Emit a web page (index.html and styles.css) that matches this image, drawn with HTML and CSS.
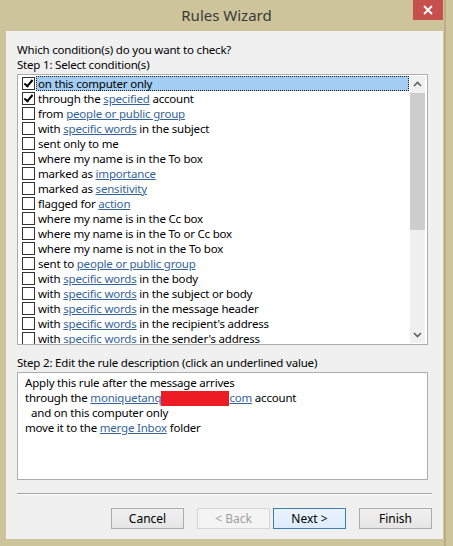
FILE: index.html
```html
<!DOCTYPE html>
<html lang="en">
<head>
  <meta charset="UTF-8">
  <title>Rules Wizard</title>
  <link rel="stylesheet" href="styles.css">
</head>
<body>
  <div class="window">
    <!-- title bar -->
    <div class="titlebar">
      <div class="title">Rules Wizard</div>
      <div class="close">
        <svg width="10" height="10" viewBox="0 0 10 10"><path d="M1 1 L9 9 M9 1 L1 9" stroke="#fff" stroke-width="1.8"/></svg>
      </div>
    </div>

    <div class="client">
      <div class="label">Which condition(s) do you want to check?</div>
      <div class="label">Step 1: Select condition(s)</div>

      <!-- condition list -->
      <div class="listbox">
        <div class="rows">
          <div class="row selected"><span class="check on"></span><span class="text">on this computer only</span></div>
          <div class="row"><span class="check on"></span><span class="text">through the <a>specified</a> account</span></div>
          <div class="row"><span class="check"></span><span class="text">from <a>people or public group</a></span></div>
          <div class="row"><span class="check"></span><span class="text">with <a>specific words</a> in the subject</span></div>
          <div class="row"><span class="check"></span><span class="text">sent only to me</span></div>
          <div class="row"><span class="check"></span><span class="text">where my name is in the To box</span></div>
          <div class="row"><span class="check"></span><span class="text">marked as <a>importance</a></span></div>
          <div class="row"><span class="check"></span><span class="text">marked as <a>sensitivity</a></span></div>
          <div class="row"><span class="check"></span><span class="text">flagged for <a>action</a></span></div>
          <div class="row"><span class="check"></span><span class="text">where my name is in the Cc box</span></div>
          <div class="row"><span class="check"></span><span class="text">where my name is in the To or Cc box</span></div>
          <div class="row"><span class="check"></span><span class="text">where my name is not in the To box</span></div>
          <div class="row"><span class="check"></span><span class="text">sent to <a>people or public group</a></span></div>
          <div class="row"><span class="check"></span><span class="text">with <a>specific words</a> in the body</span></div>
          <div class="row"><span class="check"></span><span class="text">with <a>specific words</a> in the subject or body</span></div>
          <div class="row"><span class="check"></span><span class="text">with <a>specific words</a> in the message header</span></div>
          <div class="row"><span class="check"></span><span class="text">with <a>specific words</a> in the recipient's address</span></div>
          <div class="row"><span class="check"></span><span class="text">with <a>specific words</a> in the sender's address</span></div>
        </div>
        <div class="scrollbar">
          <div class="arrow">
            <svg width="9" height="6" viewBox="0 0 9 6"><path d="M1 5 L4.5 1.5 L8 5" fill="none" stroke="#606060" stroke-width="1.6"/></svg>
          </div>
          <div class="track"><div class="thumb"></div></div>
          <div class="arrow">
            <svg width="9" height="6" viewBox="0 0 9 6"><path d="M1 1 L4.5 4.5 L8 1" fill="none" stroke="#606060" stroke-width="1.6"/></svg>
          </div>
        </div>
      </div>

      <div class="label step2">Step 2: Edit the rule description (click an underlined value)</div>

      <!-- rule description -->
      <div class="description">
        <div class="line">Apply this rule after the message arrives</div>
        <div class="line">through the <a>moniquetanq<span class="redact"></span>com</a> account</div>
        <div class="line indent">and on this computer only</div>
        <div class="line">move it to the <a>merge Inbox</a> folder</div>
      </div>

      <div class="separator"></div>

      <div class="buttons">
        <button class="btn">Cancel</button>
        <button class="btn disabled">&lt; Back</button>
        <button class="btn default">Next &gt;</button>
        <button class="btn finish">Finish</button>
      </div>
    </div>
  </div>
</body>
</html>
```

FILE: styles.css
```css
body {
  margin: 0;
  padding: 0;
  background-color: #cdc49b;
  font-family: "Noto Sans", "Open Sans", sans-serif;
  font-size: 11.5px;
  letter-spacing: -0.2px;
  color: #000;
}

.window {
  width: 453px;
  height: 546px;
  background-color: #cdc49b;
  position: relative;
  overflow: hidden;
}

.window::after {
  content: "";
  position: absolute;
  top: 0;
  bottom: 0;
  left: 444px;
  width: 2px;
  background-color: #b9af86;
}

.titlebar {
  height: 31px;
  display: flex;
  justify-content: center;
  align-items: center;
  position: relative;
}

.title {
  font-size: 15px;
  letter-spacing: 0;
  color: #3a3a3a;
  margin-top: -2px;
}

.close {
  position: absolute;
  top: 0;
  left: 413px;
  width: 30px;
  height: 20px;
  background-color: #c7504f;
  display: flex;
  align-items: center;
  justify-content: center;
}

.client {
  margin-left: 6px;
  width: 437px;
  height: 508px;
  background-color: #f0f0f0;
  box-sizing: border-box;
  padding: 11px 0 0 11px;
}

.label {
  height: 15px;
  line-height: 15px;
  white-space: nowrap;
}

a {
  color: #34639b;
  text-decoration: underline;
}

.listbox {
  margin-top: 2px;
  width: 411px;
  height: 271px;
  box-sizing: border-box;
  border: 1px solid #adadad;
  background-color: #fff;
  display: flex;
  padding: 1px;
  overflow: hidden;
}

.rows {
  flex: 1;
}

.row {
  height: 15px;
  display: flex;
  align-items: center;
  white-space: nowrap;
}

.check {
  width: 11px;
  height: 11px;
  border: 1px solid #333;
  background-color: #fff;
  margin-left: 3px;
  margin-right: 1px;
  flex-shrink: 0;
  position: relative;
}

.check.on::after {
  content: "";
  position: absolute;
  left: 3px;
  top: 0px;
  width: 3px;
  height: 7px;
  border-right: 2px solid #000;
  border-bottom: 2px solid #000;
  transform: rotate(40deg);
}

.text {
  flex: 1;
  height: 15px;
  line-height: 15px;
  padding-left: 2px;
  box-sizing: border-box;
}

.row.selected .text {
  background-color: #a3cdf2;
  outline: 1px dotted #222;
  outline-offset: -1px;
}

.scrollbar {
  width: 15px;
  margin-left: 1px;
  margin-right: 1px;
  display: flex;
  flex-direction: column;
  background-color: #f0f0f0;
}

.arrow {
  height: 16px;
  display: flex;
  align-items: center;
  justify-content: center;
}

.track {
  flex: 1;
}

.thumb {
  height: 137px;
  margin-top: 1px;
  background-color: #cdcdcd;
}

.step2 {
  margin-top: 10px;
}

.description {
  margin-top: 2px;
  width: 411px;
  height: 108px;
  box-sizing: border-box;
  border: 1px solid #adadad;
  background-color: #fff;
  padding: 2px 0 0 7px;
}

.line {
  height: 15px;
  line-height: 15px;
  white-space: nowrap;
}

.indent {
  padding-left: 6px;
}

.redact {
  display: inline-block;
  width: 68px;
  height: 15px;
  vertical-align: -4px;
  background-color: #ed1c24;
}

.separator {
  margin-top: 13px;
  width: 415px;
  height: 1px;
  background-color: #a0a0a0;
  border-bottom: 1px solid #fff;
}

.buttons {
  margin-top: 13px;
  width: 415px;
  display: flex;
  justify-content: flex-end;
}

.btn {
  width: 73px;
  height: 21px;
  margin-left: 13px;
  font-family: "Noto Sans", "Open Sans", sans-serif;
  font-size: 12px;
  color: #000;
  border: 1px solid #acacac;
  background: linear-gradient(#f0f0f0, #e5e5e5);
  padding: 0;
  line-height: 19px;
}

.btn.disabled {
  color: #a0a0a0;
  border-color: #d5d5d5;
  background: #f4f4f4;
}

.btn.default {
  margin-left: 3px;
  border-color: #3c7fb1;
  background: linear-gradient(#eaf3fb, #dcecfc);
}

.btn.finish {
  margin-left: 13px;
}
```
